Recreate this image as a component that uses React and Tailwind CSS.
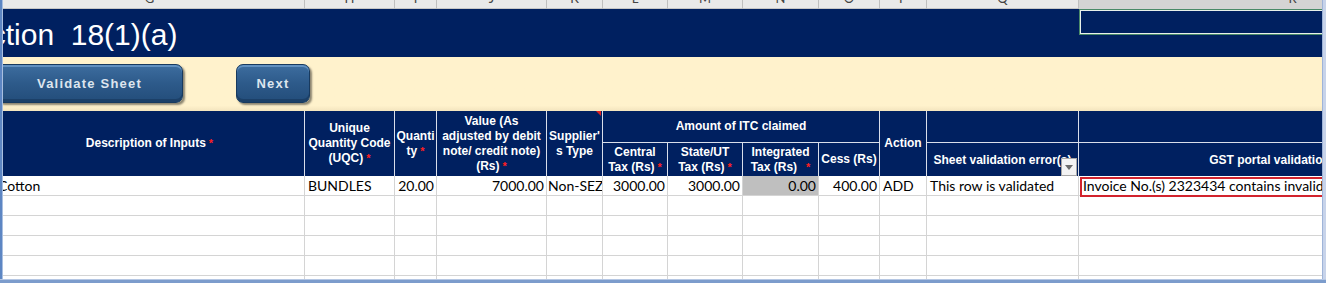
import React from 'react';

// column widths of the visible sheet (first column starts 5px left of the window)
const cols = 'grid-cols-[310px_90px_42px_110px_56px_65px_75px_76px_61px_47px_152px_428px]';

const letters = ['G', 'H', 'I', 'J', 'K', 'L', 'M', 'N', 'O', 'P', 'Q', 'R'];

const Star = () => <span className="text-[#ff1f1f] text-[11px] align-top ml-[3px]">*</span>;

function HeadCell({ children, className = '' }) {
  return (
    <div className={`flex items-center justify-center text-center border-r border-[#d9deea] px-[1px] ${className}`}>
      <div>{children}</div>
    </div>
  );
}

function SheetButton({ label, className = '' }) {
  return (
    <button
      className={`h-[39px] rounded-[7px] border border-[#183a5f] bg-gradient-to-b from-[#3d6d9f] via-[#2d5a8a] to-[#234d7a] shadow-[inset_0_2px_0_#6190c0,inset_0_-3px_0_#1c4068,2px_2px_2px_rgba(0,0,0,0.45)] text-[#dde5ee] font-bold text-[13px] tracking-[1.2px] ${className}`}
      style={{ fontFamily: '"Liberation Sans", Arial, sans-serif' }}
    >
      {label}
    </button>
  );
}

const dataRow = [
  { text: 'Cotton', align: 'left' },
  { text: 'BUNDLES', align: 'left' },
  { text: '20.00', align: 'right' },
  { text: '7000.00', align: 'right' },
  { text: 'Non-SEZ', align: 'left', tight: true },
  { text: '3000.00', align: 'right' },
  { text: '3000.00', align: 'right' },
  { text: '0.00', align: 'right', gray: true },
  { text: '400.00', align: 'right' },
  { text: 'ADD', align: 'left' },
  { text: 'This row is validated', align: 'left' },
  { text: 'Invoice No.(s) 2323434 contains invalid characters', align: 'left', error: true },
];

export default function App() {
  return (
    <div className="relative w-[1326px] h-[283px] overflow-hidden bg-white" style={{ fontFamily: '"Liberation Sans", Arial, sans-serif' }}>
      <div className="-ml-[5px] w-[1512px] flex flex-col">
        {/* column letters, scrolled so only the bottom shows */}
        <div className={`grid ${cols} h-[9px] bg-[#e9e9e9] border-b border-[#c6c6c6]`}>
          {letters.map((l, i) => (
            <div
              key={l}
              className={`h-[9px] overflow-hidden flex justify-center border-r border-[#bfbfbf] ${i === 11 ? 'bg-[#d4d4d4]' : ''}`}
            >
              <span className="text-[13px] leading-[13px] -mt-[8px] text-[#444]" style={{ fontFamily: 'Lato, sans-serif' }}>{l}</span>
            </div>
          ))}
        </div>

        {/* title band */}
        <div className="h-[48px] bg-[#002060] pt-[11px]">
          <div className="whitespace-pre text-white text-[30px] leading-[30px] ml-[-41px]">Section  18(1)(a)</div>
        </div>

        {/* button band */}
        <div className="h-[54px] bg-gradient-to-b from-[#fff2cc] from-[90%] to-[#f3e4be] flex items-start pt-[7px]">
          <SheetButton label="Validate Sheet" className="ml-[1px] w-[187px]" />
          <SheetButton label="Next" className="ml-[53px] w-[74px]" />
        </div>

        {/* table header */}
        <div
          className={`grid ${cols} grid-rows-[32px_33px] bg-[#002060] text-white font-bold text-[12px] leading-[15px]`}
        >
          <HeadCell className="row-span-2">Description of Inputs<Star /></HeadCell>
          <HeadCell className="row-span-2">Unique<br />Quantity Code<br />(UQC)<Star /></HeadCell>
          <HeadCell className="row-span-2">Quanti<br />ty<Star /></HeadCell>
          <HeadCell className="row-span-2">Value (As<br />adjusted by debit<br />note/ credit note)<br />(Rs)<Star /></HeadCell>
          <HeadCell className="row-span-2 relative">
            Supplier'<br />s Type
            <span className="absolute top-0 right-[1px] w-0 h-0 border-l-[5px] border-l-transparent border-t-[5px] border-t-[#e02020]" />
          </HeadCell>
          <HeadCell className="col-span-4 border-b">Amount of ITC claimed</HeadCell>
          <HeadCell className="row-span-2">Action</HeadCell>
          <HeadCell className="border-b"> </HeadCell>
          <HeadCell className="border-b"> </HeadCell>
          <HeadCell>Central<br />Tax (Rs)<Star /></HeadCell>
          <HeadCell>State/UT<br />Tax (Rs)<Star /></HeadCell>
          <HeadCell>Integrated<br />Tax (Rs)<span className="ml-[6px]"><Star /></span></HeadCell>
          <HeadCell>Cess (Rs)</HeadCell>
          <HeadCell className="relative pt-[2px]">
            Sheet validation error(s)
            <span className="absolute right-[1px] bottom-0 w-[16px] h-[18px] bg-[#f3f3f3] border border-[#a6a6a6] flex items-center justify-center">
              <svg width="8" height="5" viewBox="0 0 8 5"><path d="M0 0h8L4 5z" fill="#6b6b6b" /></svg>
            </span>
          </HeadCell>
          <HeadCell className="pt-[2px]">GST portal validation error(s)</HeadCell>
        </div>

        {/* data rows */}
        <div className={`grid ${cols} text-[14px] text-black`} style={{ fontFamily: 'Lato, "Liberation Sans", sans-serif' }}>
          {dataRow.map((c, i) => (
            <div
              key={i}
              className={`relative h-[20px] border-r border-b border-[#d4d4d4] flex items-center whitespace-nowrap overflow-hidden ${
                c.align === 'right' ? 'justify-end pr-[2px]' : c.tight ? 'pl-[1px]' : 'pl-[3px]'
              } ${c.gray ? 'bg-[#bfbfbf]' : ''} ${c.error ? 'overflow-visible pl-[4px]' : ''}`}
            >
              {c.text}
              {c.error && <span className="absolute left-[1px] top-[1px] -bottom-[2px] right-0 border-[2.5px] border-[#d2232d]" />}
            </div>
          ))}
          {Array.from({ length: 5 }).map((_, r) =>
            letters.map((l) => (
              <div
                key={`${r}-${l}`}
                className={`h-[20px] border-r border-b ${r === 4 ? 'border-b-[#e3c6cf] border-r-[#d4d4d4]' : 'border-[#d4d4d4]'}`}
              />
            ))
          )}
        </div>
      </div>

      {/* selected cell outline in the title band */}
      <div className="absolute left-[1079px] top-[9px] w-[260px] h-[26px] border border-[#4a8a68]">
        <div className="w-full h-full border border-[#e8f0ea]" />
      </div>

      {/* window frame */}
      <div className="absolute left-0 top-0 bottom-0 w-[3px] bg-[#5d86c3] border-r border-[#a9bfe0]" />
      <div className="absolute right-0 top-0 bottom-0 w-[4px] bg-[#c7d3ea] border-l border-[#9fb4d8]" />
      <div className="absolute left-0 right-0 bottom-0 h-[4px] bg-[#7c9ccc] border-t border-[#b5c7e4]" />
    </div>
  );
}
